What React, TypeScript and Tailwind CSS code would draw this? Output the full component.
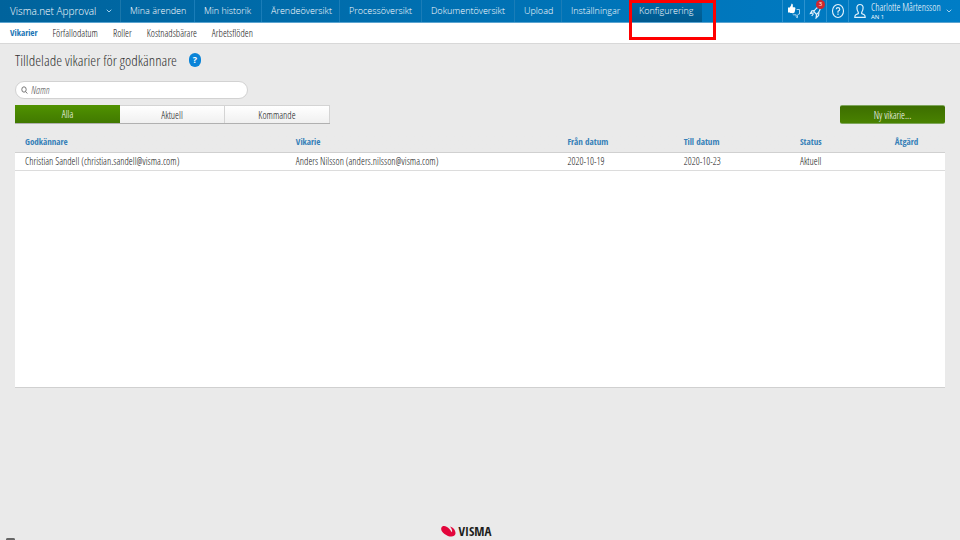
import {useState} from "react";

const links = [
    {label: "Mina ärenden", width: "w-[74px]"},
    {label: "Min historik", width: "w-[67px]"},
    {label: "Ärendeöversikt", width: "w-[78px]"},
    {label: "Processöversikt", width: "w-[82px]"},
    {label: "Dokumentöversikt", width: "w-[93px]"},
    {label: "Upload", width: "w-[47px]"},
    {label: "Inställningar", width: "w-[69px]"}
];

const sections = ["Vikarier", "Förfallodatum", "Roller", "Kostnadsbärare", "Arbetsflöden"];

const filters = ["Alla", "Aktuell", "Kommande"];

const rows = [
    {
        approver: "Christian Sandell (christian.sandell@visma.com)",
        substitute: "Anders Nilsson (anders.nilsson@visma.com)",
        from: "2020-10-19",
        to: "2020-10-23",
        status: "Aktuell"
    }
];

function Chevron() {
    return (
        <svg viewBox="0 0 6 4" className="shrink-0 w-[6px] h-[4px]" fill="none" stroke="#9fd0ee">
            <path d="M.7.7 3 3 5.3.7"/>
        </svg>
    );
}

function ThumbsIcon() {
    return (
        <svg viewBox="0 0 14 16" className="shrink-0 w-[14px] h-[16px]">
            <path fill="#fff" d="M1 4.600h1.800L4.300 2V.8q1.500-.4 1.500 1.200v2.200h1.800q1 .3.8 1.300l-.7 3.500q-.3 1-1.300 1H3.400L2.800 9.600H1z"/>
            <path fill="none" stroke="#b9def5" strokeWidth=".9" d="M9.600 6.500H12.500v4.500H11.500l-1 1.500v2.200q-1.300.2-1.300-1.200v-1.700H6.500q-.8-.4-.6-1.300"/>
        </svg>
    );
}

function RocketIcon() {
    return (
        <svg viewBox="0 0 14 16" className="shrink-0 w-[14px] h-[16px]" fill="none" stroke="#dff1fc" strokeWidth="1.200">
            <path d="M11.500 3.500Q7.500 4 4.800 8.500l2.700 3q3.800-3 4-8z"/>
            <path d="M5.300 7.500 2.900 7.900 1.500 10.500l3.300-.7M9.900 9.200l-.3 3.300-2.500 2.500.4-3.500M4.300 11l-1.600 2"/>
        </svg>
    );
}

function HelpIcon() {
    return (
        <svg viewBox="0 0 14 16" className="shrink-0 w-[14px] h-[16px]" fill="none" stroke="#e6f4fd" strokeWidth="1.100">
            <ellipse cx="7" cy="8" rx="5.500" ry="6.500"/>
            <path d="M5.200 6.300Q5.300 4.600 7 4.600t1.800 1.600Q8.800 7.400 7 8.300v1.400M7 10.600v1.300"/>
        </svg>
    );
}

function UserIcon() {
    return (
        <svg viewBox="0 0 14 16" className="shrink-0 w-[14px] h-[16px]" fill="none" stroke="#dff1fc" strokeWidth="1.200">
            <path d="M5.300 9.300Q3.900 7.600 3.900 4.800 4 1.500 7 1.500t3.100 3.300q0 2.800-1.400 4.500v1.200l2.500 1.200q1 .6 1 2.600H1.800q0-2 1-2.600l2.500-1.200z"/>
        </svg>
    );
}

function SearchIcon() {
    return (
        <svg viewBox="0 0 7 8" className="shrink-0 w-[7px] h-[8px]" fill="none" stroke="#777">
            <ellipse cx="3" cy="3.500" rx="2.200" ry="2.700"/>
            <path d="m4.500 5.500 1.800 2"/>
        </svg>
    );
}

function VismaLogo() {
    return (
        <a href="#" className="flex items-center gap-[3px] font-['Open_Sans_Condensed','Open_Sans',sans-serif] font-bold text-[13px] leading-[18px] text-[#1d1d1b]">
            <svg viewBox="0 0 15 12" className="w-[15px] h-[12px]" fill="#e3063c">
                <path d="M.3 3C1 .8 3.500.6 6 2c2 1.200 3.500 3 4.800 5.200C11.600 6.200 11 4 9 1.500c3.500 1 5.700 4 5.500 7-.5 4-6.500 4-11 .5C1 7-.3 5 .3 3z"/>
            </svg>
            VISMA
        </a>
    );
}

export default function App() {

    const [filter, setFilter] = useState("Alla");
    const [query, setQuery] = useState("");

    return (
        <div className="flex flex-col min-h-screen bg-[#eaeaea] text-[#111] font-['Open_Sans_Condensed_Light','Open_Sans',sans-serif] text-[10px] leading-[12px] whitespace-nowrap">
            <header className="flex h-[23px] bg-linear-to-r from-[#00639c] via-[#0071b3] to-[#007dc6] border-b border-[#5ba4d0] text-white">
                <button className="flex items-center justify-between w-[121px] pl-[10px] pr-[8px] font-['Open_Sans',sans-serif] font-light text-[10px] leading-[16px] border-r border-[#1a77ab]">
                    Visma.net Approval
                    <Chevron/>
                </button>
                <nav className="flex font-['Open_Sans',sans-serif] font-light text-[9px] leading-[16px]">
                    {links.map(({label, width}) =>
                        <a key={label} href="#" className={`flex items-center pl-[9px] border-r border-[#1a7db8] ${width}`}>{label}</a>)}
                    <div className="relative flex">
                        <a href="#" className="flex items-center w-[71px] pl-[8px] bg-linear-to-b from-[#0069a5] to-[#005a8f]" aria-current="page">
                            Konfigurering
                        </a>
                        <div className="absolute -left-[2px] top-0 z-10 w-[87px] h-[40px] border-3 border-[#ff0000] pointer-events-none"/>
                    </div>
                </nav>
                <div className="flex ml-auto">
                    <button className="flex items-center justify-center w-[22px] border-l border-[#2b92cf]" aria-label="Feedback"><ThumbsIcon/></button>
                    <button className="relative flex items-center justify-center w-[22px] border-l border-[#2b92cf]" aria-label="Nyheter">
                        <RocketIcon/>
                        <span className="absolute top-0 right-[1px] w-[9px] h-[9px] rounded-full bg-[#d0272d] text-white font-['Open_Sans',sans-serif] text-[6px] leading-[9px] text-center">3</span>
                    </button>
                    <button className="flex items-center justify-center w-[22px] border-l border-[#2b92cf]" aria-label="Hjälp"><HelpIcon/></button>
                    <button className="flex items-center w-[112px] pl-[4px] pr-[8px] gap-[4px] border-l border-[#2b92cf] text-left">
                        <UserIcon/>
                        <span className="flex flex-col flex-1">
                            <span className="leading-[12px]">Charlotte Mårtensson</span>
                            <span className="font-['Open_Sans',sans-serif] text-[6px] leading-[8px]">AN 1</span>
                        </span>
                        <Chevron/>
                    </button>
                </div>
            </header>
            <nav className="flex items-center h-[21px] px-[10px] gap-[15px] bg-white border-b border-[#d8d8d8]">
                {sections.map((section, i) =>
                    <a key={section} href="#" className={i === 0 ? "font-['Open_Sans_Condensed','Open_Sans',sans-serif] font-bold text-[9px] text-[#1b75b5]" : ""}>{section}</a>)}
            </nav>
            <main className="flex flex-col px-[15px]">
                <div className="flex items-center h-[32px] gap-[12px]">
                    <h1 className="text-[15px] leading-[20px] text-[#333]">Tilldelade vikarier för godkännare</h1>
                    <button className="w-[12px] h-[14px] rounded-full bg-[#0a84d8] text-white font-['Open_Sans',sans-serif] text-[9px] leading-[14px] font-bold" aria-label="Hjälp">?</button>
                </div>
                <label className="flex items-center w-[233px] h-[18px] mt-[5px] px-[5px] gap-[3px] rounded-full border border-[#d2d2d2] bg-white">
                    <SearchIcon/>
                    <input
                        className="flex-1 min-w-0 outline-none placeholder:italic placeholder:text-[#555]"
                        placeholder="Namn"
                        aria-label="Namn"
                        value={query}
                        onChange={(e) => setQuery(e.target.value)}
                    />
                </label>
                <div className="flex justify-between mt-[6px]">
                    <div className="grid grid-cols-3 w-[315px] h-[19px] border-b border-[#b0b0b0]">
                        {filters.map((name) =>
                            <button
                                key={name}
                                onClick={() => setFilter(name)}
                                className={name === filter ? "bg-linear-to-b from-[#509200] to-[#417900] text-white" : "bg-linear-to-b from-white to-[#f0f0f0] border-r border-t border-[#d4d4d4]"}
                            >
                                {name}
                            </button>)}
                    </div>
                    <button className="w-[105px] h-[19px] rounded-[2px] border-y border-[#7da55a] bg-linear-to-b from-[#3d6e00] to-[#498200] text-white">Ny vikarie...</button>
                </div>
                <div className="mt-[8px] min-h-[256px] bg-linear-to-b from-[#eaeaea] from-[20px] to-white to-[20px] border-b border-[#d0d0d0]">
                    <table className="w-full table-fixed text-left">
                        <thead className="font-['Open_Sans_Condensed','Open_Sans',sans-serif] text-[9px]">
                            <tr className="h-[20px] text-[#3580b8] border-b border-[#d0d0d0]">
                                <th className="w-[30.2%] pl-[10px]">Godkännare</th>
                                <th className="w-[29.2%]">Vikarie</th>
                                <th className="w-[12.5%]">Från datum</th>
                                <th className="w-[12.5%]">Till datum</th>
                                <th className="w-[10.2%]">Status</th>
                                <th>Åtgärd</th>
                            </tr>
                        </thead>
                        <tbody>
                            {rows.map(({approver, substitute, from, to, status}) =>
                                <tr key={approver} className="h-[18px] border-b border-[#dcdcdc]">
                                    <td className="pl-[10px]">{approver}</td>
                                    <td>{substitute}</td>
                                    <td>{from}</td>
                                    <td>{to}</td>
                                    <td>{status}</td>
                                    <td/>
                                </tr>)}
                        </tbody>
                    </table>
                </div>
            </main>
            <footer className="grid grid-cols-[1fr_auto_1fr] items-end mt-auto pl-[6px] pr-[34px]">
                <span className="w-[9px] h-[2px] rounded-t-[2px] border-2 border-b-0 border-[#666] bg-white"/>
                <VismaLogo/>
            </footer>
        </div>
    );
}
